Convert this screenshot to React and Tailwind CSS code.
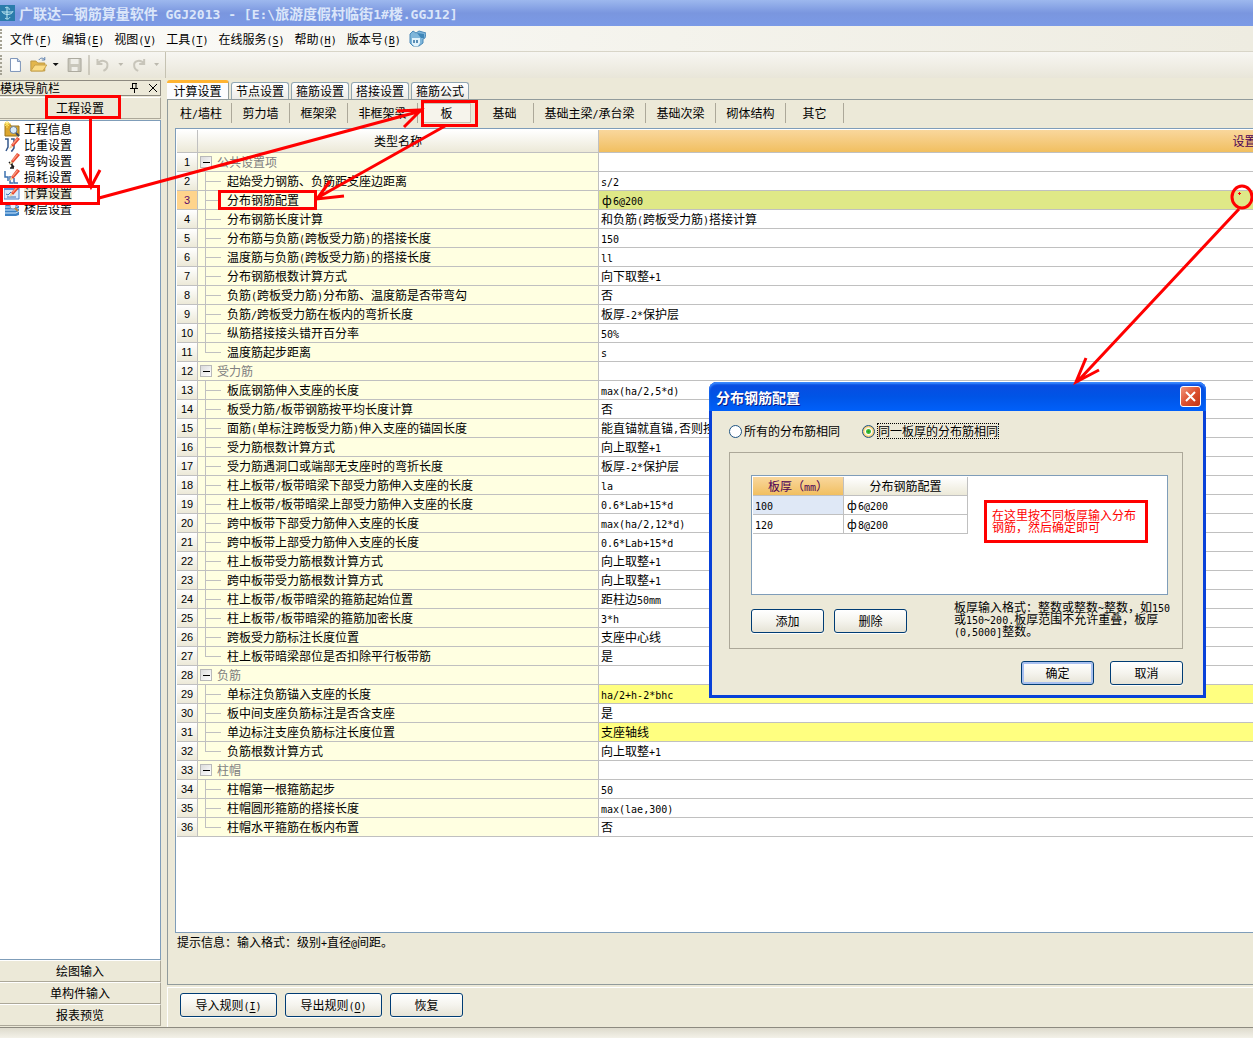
import React from "react";

const menus = [
  ["文件", "F"],
  ["编辑", "E"],
  ["视图", "V"],
  ["工具", "T"],
  ["在线服务", "S"],
  ["帮助", "H"],
  ["版本号", "B"],
];

const topTabs = ["计算设置", "节点设置", "箍筋设置", "搭接设置", "箍筋公式"];

const memberTabs = [
  ["柱/墙柱", "w-[61px]"],
  ["剪力墙", "w-[58px]"],
  ["框架梁", "w-[58px]"],
  ["非框架梁", "w-[70px]"],
  ["板", "w-[58px]"],
  ["基础", "w-[58px]"],
  ["基础主梁/承台梁", "w-[112px]"],
  ["基础次梁", "w-[70px]"],
  ["砌体结构", "w-[70px]"],
  ["其它", "w-[58px]"],
];

const groups = [
  {
    name: "公共设置项",
    items: [
      ["起始受力钢筋、负筋距支座边距离", "s/2"],
      ["分布钢筋配置", "ф6@200", "current"],
      ["分布钢筋长度计算", "和负筋(跨板受力筋)搭接计算"],
      ["分布筋与负筋(跨板受力筋)的搭接长度", "150"],
      ["温度筋与负筋(跨板受力筋)的搭接长度", "ll"],
      ["分布钢筋根数计算方式", "向下取整+1"],
      ["负筋(跨板受力筋)分布筋、温度筋是否带弯勾", "否"],
      ["负筋/跨板受力筋在板内的弯折长度", "板厚-2*保护层"],
      ["纵筋搭接接头错开百分率", "50%"],
      ["温度筋起步距离", "s"],
    ],
  },
  {
    name: "受力筋",
    items: [
      ["板底钢筋伸入支座的长度", "max(ha/2,5*d)"],
      ["板受力筋/板带钢筋按平均长度计算", "否"],
      ["面筋(单标注跨板受力筋)伸入支座的锚固长度", "能直锚就直锚,否则按公式计算"],
      ["受力筋根数计算方式", "向上取整+1"],
      ["受力筋遇洞口或端部无支座时的弯折长度", "板厚-2*保护层"],
      ["柱上板带/板带暗梁下部受力筋伸入支座的长度", "la"],
      ["柱上板带/板带暗梁上部受力筋伸入支座的长度", "0.6*Lab+15*d"],
      ["跨中板带下部受力筋伸入支座的长度", "max(ha/2,12*d)"],
      ["跨中板带上部受力筋伸入支座的长度", "0.6*Lab+15*d"],
      ["柱上板带受力筋根数计算方式", "向上取整+1"],
      ["跨中板带受力筋根数计算方式", "向上取整+1"],
      ["柱上板带/板带暗梁的箍筋起始位置", "距柱边50mm"],
      ["柱上板带/板带暗梁的箍筋加密长度", "3*h"],
      ["跨板受力筋标注长度位置", "支座中心线"],
      ["柱上板带暗梁部位是否扣除平行板带筋", "是"],
    ],
  },
  {
    name: "负筋",
    items: [
      ["单标注负筋锚入支座的长度", "ha/2+h-2*bhc", "changed"],
      ["板中间支座负筋标注是否含支座", "是"],
      ["单边标注支座负筋标注长度位置", "支座轴线", "changed"],
      ["负筋根数计算方式", "向上取整+1"],
    ],
  },
  {
    name: "柱帽",
    items: [
      ["柱帽第一根箍筋起步", "50"],
      ["柱帽圆形箍筋的搭接长度", "max(lae,300)"],
      ["柱帽水平箍筋在板内布置", "否"],
    ],
  },
];

// flatten the tree into numbered rows
const rows = groups.flatMap((g) => [
  { name: g.name, group: true },
  ...g.items.map(([name, value, state], i) => ({
    name,
    value,
    state,
    last: i === g.items.length - 1,
  })),
]);

const valueBg = { current: "bg-[#dfe887]", changed: "bg-[#ffff80]" };

// latin runs take half the width of a han character
const Txt = ({ children, latin = "text-[10px]" }) =>
  children.split(/([\x20-\x7e]+|ф)/).map((part, i) => {
    if (part === "ф") {
      return (
        <span key={i} className="inline-block w-3 text-center">
          {part}
        </span>
      );
    }
    return i % 2 ? (
      <span
        key={i}
        className={`leading-[8px] whitespace-pre font-['DejaVu_Sans_Mono',monospace] ${latin}`}
      >
        {part}
      </span>
    ) : (
      part
    );
  });

const Mnemonic = ({ text, letter }) => (
  <>
    {text}
    <span className="font-['DejaVu_Sans_Mono',monospace] text-[10px] leading-[8px]">
      (<span className="underline underline-offset-2">{letter}</span>)
    </span>
  </>
);

const XpButton = ({ children, className = "w-[73px]", focus }) => (
  <button
    className={`h-6 rounded-[3px] border border-[#003c74] bg-linear-to-b from-white via-[#f5f4ee] to-[#e6e3d6] text-center whitespace-nowrap ${
      focus ? "shadow-[inset_0_0_0_2px_#a8c0f0]" : "shadow-[0_1px_1px_#ffffff]"
    } ${className}`}
  >
    {children}
  </button>
);

const Pencil = () => (
  <>
    <path d="M7 8 13 0l3 2-7 8z" fill="#e8452c" />
    <path d="m8 7 5-6 1 1-5 6z" fill="#f79a80" />
    <path d="m7 8 2 2-4 2z" fill="#f2cf9a" />
  </>
);

const navItems = [
  {
    name: "工程信息",
    icon: (
      <>
        <path d="M1 3h5l1 2h8v10H1z" fill="#dca62e" stroke="#9b741a" />
        <path d="M3 0v7M0 3h7M1 1l4 4M5 1 1 5" stroke="#ffe25c" />
        <circle cx="9.500" cy="9" r="3.500" fill="#d8ebfa" stroke="#6c7f99" />
        <path d="m12 12 3 3" stroke="#38475e" strokeWidth="2" />
      </>
    ),
  },
  {
    name: "比重设置",
    icon: (
      <>
        <path d="M1 2h3v8l-2 4M7 2h3v9l-2 3H7" fill="none" stroke="#35588c" strokeWidth="1.500" />
        <Pencil />
      </>
    ),
  },
  {
    name: "弯钩设置",
    icon: (
      <>
        <path d="M8 8v7M5 9l5 5M6 15h4" fill="none" stroke="#1e1e1e" strokeWidth="1.500" />
        <Pencil />
      </>
    ),
  },
  {
    name: "损耗设置",
    icon: (
      <>
        <path d="M1 2v6h3v4M6 7v7h3M10 9v5h4" fill="none" stroke="#3c72b0" strokeWidth="1.500" />
        <Pencil />
      </>
    ),
  },
  {
    name: "计算设置",
    active: true,
    icon: (
      <>
        <path d="M0 3h15v11H0z" fill="#dceafb" stroke="#4b7fc4" />
        <path d="M0 3h15v2H0z" fill="#5b93dd" />
        <path d="m2 9 2 1 3-3M3 12h9" fill="none" stroke="#3c72b0" />
        <Pencil />
      </>
    ),
  },
  {
    name: "楼层设置",
    icon: (
      <>
        <path d="M3 2h9l3 3v9l-3 1H1V5z" fill="#3d82c4" />
        <path d="M1 6h11M1 9h11M1 12h11M12 6l3-2M12 9l3-2M12 12l3-2" stroke="#d4ebff" />
        <circle cx="9" cy="5" r="3" fill="#e8f3fc" stroke="#8a9bb0" />
        <path d="m11 7 3 3" stroke="#b98a4a" strokeWidth="2" />
      </>
    ),
  },
];

const TitleBar = () => (
  <header className="flex h-[26px] items-center gap-1 bg-linear-to-b from-[#9db8ee] via-[#7a96df] to-[#7b9ae6] text-sm font-bold whitespace-nowrap text-[#dbe6fa]">
    <svg width="15" height="16" viewBox="0 0 15 16">
      <path d="M0 0h15v16H0z" fill="#2b7cab" />
      <path d="M7 2v12M3 7h9M2 6c0 4 10 5 11 0M5 3c2-2 5 0 4 2M5 13c2 2 4 1 5-1" fill="none" stroke="#bfeaf5" />
    </svg>
    <h1>
      <Txt latin="text-[13px]">{"广联达—钢筋算量软件 GGJ2013 - [E:\\旅游度假村临街1#楼.GGJ12]"}</Txt>
    </h1>
  </header>
);

const Grip = () => (
  <span className="mr-auto h-5 w-[3px] shrink-0 border-l-2 border-dotted border-[#a5a294]" />
);

const MenuBar = () => (
  <nav className="flex h-[26px] items-center border-b border-[#d8d5c8] bg-linear-to-r from-[#fbfbf9] to-[#eeece1]">
    <div className="flex w-[10px]">
      <Grip />
    </div>
    <div className="flex items-center gap-[10px] whitespace-nowrap">
      {menus.map(([text, letter]) => (
        <button key={letter}>
          <Mnemonic text={text} letter={letter} />
        </button>
      ))}
    </div>
    <svg className="ml-2" width="17" height="17" viewBox="0 0 17 17">
      <path d="m1 4 3-3 3 2 3-2 7 2-1 5-2 1v4l-4 3H4l-3-3V9z" fill="#7fb6da" stroke="#4a89b8" />
      <path d="m8 3 7 1v4h-3z" fill="#3f86b8" />
      <path d="M3 8h8v5l-2 3H5l-2-2z" fill="#e2f3fb" />
      <path d="M5 10v3M8 10v3" stroke="#2f6e9f" strokeWidth="1.500" />
    </svg>
  </nav>
);

const ToolBar = () => (
  <div className="flex h-[26px] items-center bg-linear-to-b from-[#f7f6f2] to-[#e9e6d9]">
    <div className="flex h-full w-[166px] items-center border-r border-[#c5c2b2]">
      <div className="flex w-[8px]">
        <Grip />
      </div>
      <svg width="158" height="20" viewBox="8 0 158 20" aria-hidden="true">
        <path d="M10.500 3.500h7l3 3v10h-10z" fill="#fdfeff" stroke="#7c93b8" />
        <path d="M17.500 3.500v3h3" fill="#c4d4ec" stroke="#7c93b8" />
        <path d="M31 6h5l2 2h7v8H31z" fill="#e3b64b" stroke="#c09a45" />
        <path d="m31 16 4-6h12l-4 6z" fill="#fbdc85" stroke="#c9a24c" />
        <path d="M39 5c2-3 5-2 6 0m0-3v3h-3" fill="none" stroke="#5c7fae" />
        <path d="M53 8h6l-3 3z" fill="#111" />
        <path d="M68.500 3.500h13v13h-13z" fill="#c9c7bc" stroke="#aaa89c" />
        <path d="M71 4h8v5h-8zM72 12h6v4h-6z" fill="#efeee8" />
        <path d="M89.500 0v20" stroke="#aca899" />
        <path d="M98 4v5h5m-5 0c3-5 11-4 10 2 0 2-2 4-4 5" fill="none" stroke="#c8c5ba" strokeWidth="2" />
        <path d="M119 8h5l-2.500 3z" fill="#bcb9ae" />
        <path d="M145 4v5h-5m5 0c-3-5-11-4-10 2 0 2 2 4 4 5" fill="none" stroke="#c8c5ba" strokeWidth="2" />
        <path d="M155 8h5l-2.500 3z" fill="#bcb9ae" />
      </svg>
    </div>
  </div>
);

const SideButton = ({ children }) => (
  <button className="h-[22px] w-full border-t border-r border-b border-t-white border-r-[#aca899] border-b-[#aca899] text-center">
    {children}
  </button>
);

const Sidebar = () => (
  <aside className="flex w-[161px] shrink-0 flex-col pt-[2px]">
    <div className="flex h-4 items-center overflow-hidden border border-l-0 border-[#8d8a80] whitespace-nowrap">
      <span className="grow">模块导航栏</span>
      <svg width="32" height="12" viewBox="0 0 32 12">
        <path d="M4 1.500h5M4.500 1v6M8 1v6M2 6.500h8M6.500 7v4" stroke="#000" fill="none" />
        <path d="m21 2 8 8m0-8-8 8" stroke="#000" />
      </svg>
    </div>
    <div className="py-px">
      <SideButton>工程设置</SideButton>
    </div>
    <ul className="grow border border-l-0 border-[#7f9db9] bg-white">
      {navItems.map((item) => (
        <li key={item.name} className="flex h-4 items-center gap-1 pl-1">
          <svg width="16" height="16" viewBox="0 0 16 16" className="shrink-0">
            {item.icon}
          </svg>
          <a href="#" className={item.active ? "bg-[#ece9d8] leading-[14px]" : "leading-[14px]"}>
            {item.name}
          </a>
        </li>
      ))}
    </ul>
    <div className="pb-px">
      <SideButton>绘图输入</SideButton>
      <SideButton>单构件输入</SideButton>
      <SideButton>报表预览</SideButton>
    </div>
  </aside>
);

const TopTabs = () => (
  <div className="flex items-end gap-[2px]">
    {topTabs.map((t, i) =>
      i === 0 ? (
        <button
          key={t}
          className="h-[19px] w-[62px] rounded-t-[3px] border-t-[3px] border-r border-t-[#ffb432] border-r-[#919b9c] bg-[#fcfcfe]"
        >
          {t}
        </button>
      ) : (
        <button
          key={t}
          className="h-[17px] w-[58px] rounded-t-[3px] border border-b-0 border-[#91a7b4] bg-linear-to-b from-white to-[#ecebe6]"
        >
          {t}
        </button>
      )
    )}
  </div>
);

const MemberTabs = () => (
  <div className="flex h-[22px] items-center whitespace-nowrap">
    {memberTabs.map(([t, width]) => (
      <div key={t} className={`flex h-5 shrink-0 border-r border-[#aca899] ${width}`}>
        <button
          className={
            t === "板" ? "mx-1 grow border border-[#c8c5b8] bg-[#f6f4ec]" : "grow"
          }
        >
          <Txt>{t}</Txt>
        </button>
      </div>
    ))}
  </div>
);

const NameCell = ({ row }) =>
  row.group ? (
    <div className="flex h-[18px] items-center gap-[5px] pl-[2px] text-[#808080]">
      <button
        aria-label="收起"
        className="flex size-3 items-center justify-center border border-[#b9b9b9] bg-linear-to-br from-[#dcdcdc] to-white"
      >
        <span className="h-px w-[7px] bg-black" />
      </button>
      {row.name}
    </div>
  ) : (
    <div className="flex h-[18px] items-center gap-[6px] pl-[7px]">
      <span className="h-full w-4">
        <span className="block h-[10px] border-b border-l border-[#c0c0c0]" />
        {!row.last && <span className="block h-2 border-l border-[#c0c0c0]" />}
      </span>
      <span>
        <Txt>{row.name}</Txt>
      </span>
    </div>
  );

const SettingsTable = () => (
  <div className="min-h-0 grow overflow-hidden border border-r-0 border-[#7f9db9] bg-white p-px">
    <table className="w-[1726px] table-fixed border-separate border-spacing-0">
      <thead>
        <tr className="h-[23px] [&>th]:border-r [&>th]:border-b [&>th]:border-[#c0c0c0] [&>th]:font-normal">
          <th className="w-[21px] bg-linear-to-b from-white to-[#ece9d8]" />
          <th className="w-[401px] bg-linear-to-b from-white to-[#ece9d8]">类型名称</th>
          <th className="bg-linear-to-b from-[#f9d79c] to-[#f1bf5f] text-[#4b0055]">设置值</th>
        </tr>
      </thead>
      <tbody>
        {rows.map((row, i) => (
          <tr
            key={i}
            className="h-[19px] [&>td]:border-r [&>td]:border-b [&>td]:border-[#c0c0c0]"
          >
            <td
              className={`text-center font-['Liberation_Sans',sans-serif] text-[11px] ${
                row.state === "current"
                  ? "bg-[#ffd48c] text-[#5b0a6b]"
                  : "bg-linear-to-b from-white to-[#ece9d8]"
              }`}
            >
              {i + 1}
            </td>
            <td className="bg-[#ffffe1]">
              <NameCell row={row} />
            </td>
            <td className={`pl-[2px] ${valueBg[row.state] || ""}`}>
              <Txt>{row.value || ""}</Txt>
            </td>
          </tr>
        ))}
      </tbody>
    </table>
  </div>
);

const radioClass =
  "size-[13px] appearance-none rounded-full border border-[#1d5281] bg-white checked:bg-[radial-gradient(circle,#21a121_0,#3fbf3f_2px,#ffffff_3px,#fbe3a8_4px,#f0b84c_6px)]";

const Dialog = () => (
  <section
    role="dialog"
    aria-label="分布钢筋配置"
    className="absolute top-[382px] left-[709px] w-[497px] rounded-t-lg border-x-[3px] border-b-[3px] border-[#0841d8] bg-[#ece9d8]"
  >
    <div className="-mx-[3px] flex h-[29px] items-center justify-between rounded-t-lg bg-linear-to-b from-[#0a4be0] via-[#0054e6] to-[#0060fa] pr-[5px] pl-[7px] text-sm font-bold text-white shadow-[inset_0_2px_2px_#3c8cff]">
      <h2 className="[text-shadow:1px_1px_#0a1883]">分布钢筋配置</h2>
      <button
        aria-label="关闭"
        className="flex size-[21px] items-center justify-center rounded-[3px] border border-white bg-linear-to-br from-[#f0947a] via-[#dd5130] to-[#c03413]"
      >
        <svg width="13" height="13" viewBox="0 0 13 13">
          <path d="m2 2 9 9m0-9-9 9" stroke="#fff" strokeWidth="2" />
        </svg>
      </button>
    </div>
    <div className="pt-3 pr-5 pb-[10px] pl-[17px]">
      <div className="flex h-4 items-center gap-[22px] whitespace-nowrap">
        <label className="flex items-center gap-[2px]">
          <input type="radio" name="scope" className={radioClass} />
          所有的分布筋相同
        </label>
        <label className="flex items-center gap-[2px]">
          <input type="radio" name="scope" defaultChecked className={radioClass} />
          <span className="border border-dotted border-black leading-[14px]">同一板厚的分布筋相同</span>
        </label>
      </div>
      <div className="mt-[13px] border border-[#aca899] pt-[22px] pr-[14px] pb-[11px] pl-[21px]">
        <div className="relative h-[120px] border border-[#7f9db9] bg-white p-px">
          <table className="w-[215px] table-fixed border-separate border-spacing-0 [&_td]:border-r [&_td]:border-b [&_td]:border-[#c0c0c0] [&_th]:border-r [&_th]:border-b [&_th]:border-[#c0c0c0] [&_th]:font-normal">
            <thead>
              <tr className="h-[19px]">
                <th className="w-[91px] bg-linear-to-b from-[#f9d79c] to-[#f1bf5f] text-[#4b0055]">
                  <Txt>板厚（mm）</Txt>
                </th>
                <th className="bg-linear-to-b from-white to-[#ece9d8]">分布钢筋配置</th>
              </tr>
            </thead>
            <tbody>
              <tr className="h-[19px]">
                <td className="bg-[#dfe8f6] pl-[2px]">
                  <Txt>100</Txt>
                </td>
                <td className="pl-[2px]">
                  <Txt>ф6@200</Txt>
                </td>
              </tr>
              <tr className="h-[19px]">
                <td className="pl-[2px]">
                  <Txt>120</Txt>
                </td>
                <td className="pl-[2px]">
                  <Txt>ф8@200</Txt>
                </td>
              </tr>
            </tbody>
          </table>
          <p className="absolute top-6 left-[232px] h-[43px] w-[164px] border-3 border-[#ff0000] px-[5px] py-[6px] text-[#ff0000]">
            在这里按不同板厚输入分布钢筋，然后确定即可
          </p>
        </div>
        <div className="mt-[6px] flex h-9 gap-[10px]">
          <div className="flex gap-[10px] pt-2">
            <XpButton>添加</XpButton>
            <XpButton>删除</XpButton>
          </div>
          <p className="ml-auto w-[214px] whitespace-nowrap">
            <Txt>板厚输入格式：整数或整数~整数，如150</Txt>
            <br />
            <Txt>或150~200.板厚范围不允许重叠，板厚</Txt>
            <br />
            <Txt>(0,5000]整数。</Txt>
          </p>
        </div>
      </div>
      <div className="mt-3 flex justify-end gap-4">
        <XpButton focus>确定</XpButton>
        <XpButton>取消</XpButton>
      </div>
    </div>
  </section>
);

const Markup = () => (
  <svg
    className="pointer-events-none absolute top-0 left-0"
    width="1253"
    height="1038"
    viewBox="0 0 1253 1038"
    fill="none"
    stroke="#ff0000"
    strokeWidth="3"
  >
    <path d="M46.500 96.500h73v21h-73zM1.500 186.500h97v17h-97zM422.500 101.500h54v24h-54zM219.500 191.500h96v17h-96z" />
    <path d="M90.500 118v68M82 168l9 19 9-17" />
    <path d="m99 198 322-87M397 111l24-1-17 17" />
    <path d="M445 126 317 198M330 181l-13 18 27-3" />
    <ellipse cx="1242" cy="197" rx="10" ry="11" />
    <path d="m1239 209-162 173M1086 358l-10 24 23-12" />
    <path d="M1238 193.500h3M1239.500 192v3" strokeWidth="1" />
  </svg>
);

const App = () => {
  return (
    <div className="relative flex min-h-screen flex-col overflow-hidden bg-[#ece9d8] font-['Noto_Sans_CJK_SC',sans-serif] text-xs leading-3 text-black">
      <TitleBar />
      <MenuBar />
      <ToolBar />
      <div className="flex grow border-b border-[#8d8a80]">
        <Sidebar />
        <main className="flex min-w-0 grow flex-col pt-[2px] pl-[6px]">
          <TopTabs />
          <div className="flex grow flex-col border-t border-b border-l border-[#919b9c] pt-[2px] pl-[3px]">
            <MemberTabs />
            <div className="flex grow flex-col pt-1 pl-1">
              <SettingsTable />
              <p className="h-[51px] pt-[3px] pl-[2px]">
                <Txt>提示信息：输入格式：级别+直径@间距。</Txt>
              </p>
            </div>
          </div>
          <div className="mt-[2px] flex h-10 gap-2 border-t border-l border-white pt-[5px] pl-3">
            <XpButton className="w-[97px]">
              <Mnemonic text="导入规则" letter="I" />
            </XpButton>
            <XpButton className="w-[97px]">
              <Mnemonic text="导出规则" letter="O" />
            </XpButton>
            <XpButton>恢复</XpButton>
          </div>
        </main>
      </div>
      <footer className="h-[10px] bg-linear-to-b from-[#dedbcd] to-[#f3f1e8]" />
      <Dialog />
      <Markup />
    </div>
  );
};

export default App;
